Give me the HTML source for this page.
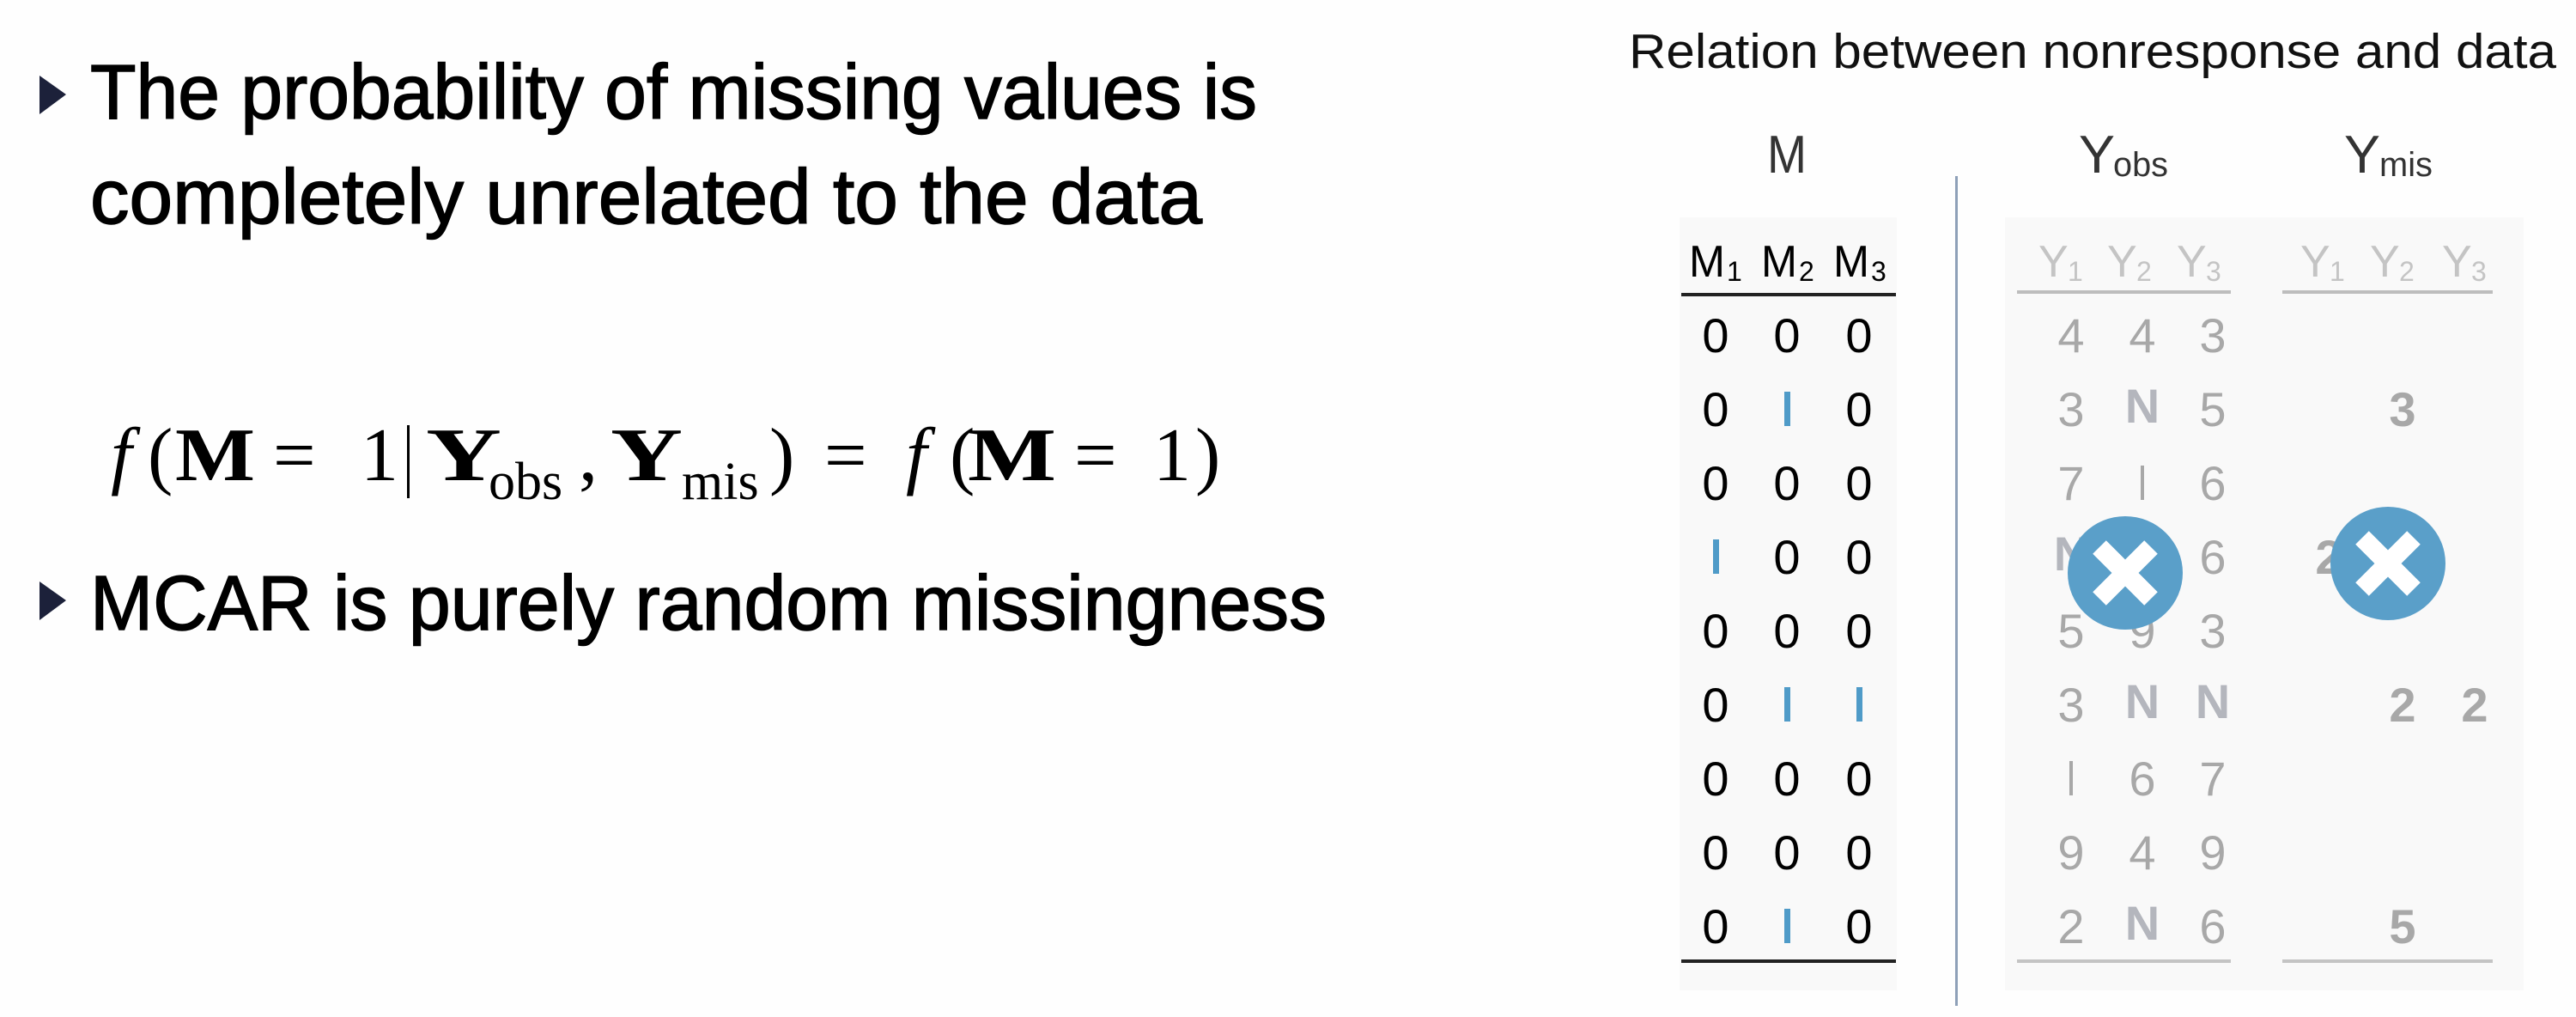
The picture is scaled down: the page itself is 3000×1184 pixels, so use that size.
<!DOCTYPE html>
<html><head><meta charset="utf-8"><style>
html,body{margin:0;padding:0;background:#fff;width:3000px;height:1184px;overflow:hidden}
svg{display:block}
.s{font-family:"Liberation Sans",sans-serif}
.r{font-family:"Liberation Serif",serif}
</style></head><body>
<svg width="3000" height="1184" viewBox="0 0 3000 1184" xmlns="http://www.w3.org/2000/svg">
<rect width="3000" height="1184" fill="#fefefe"/>
<!-- left bullets -->
<polygon points="46,88 46,133 77,110" fill="#1c213a"/>
<g stroke="#000" stroke-width="1.5">
<text class="s" x="105" y="138" font-size="90" fill="#000" textLength="1359" lengthAdjust="spacingAndGlyphs">The probability of missing values is</text>
<text class="s" x="105" y="260" font-size="90" fill="#000" textLength="1295" lengthAdjust="spacingAndGlyphs">completely unrelated to the data</text>
<text class="s" x="105" y="733" font-size="90" fill="#000" textLength="1440" lengthAdjust="spacingAndGlyphs">MCAR is purely random missingness</text>
</g>
<polygon points="46,677 46,722 77,699" fill="#1c213a"/>
<!-- formula -->
<g class="r" fill="#000" font-size="88">
<text x="129" y="559" font-style="italic">f</text>
<text x="172" y="559">(</text>
<text x="204" y="559" font-weight="bold" textLength="93" lengthAdjust="spacingAndGlyphs">M</text>
<text x="318" y="559">=</text>
<text x="420" y="559">1</text>
<rect x="474" y="495" width="3" height="85"/>
<text x="496" y="559" font-weight="bold" textLength="88" lengthAdjust="spacingAndGlyphs">Y</text>
<text x="569" y="581" font-size="62">obs</text>
<text x="674" y="559">,</text>
<text x="711" y="559" font-weight="bold" textLength="84" lengthAdjust="spacingAndGlyphs">Y</text>
<text x="794" y="581" font-size="62">mis</text>
<text x="896" y="559">)</text>
<text x="960" y="559">=</text>
<text x="1055" y="559" font-style="italic">f</text>
<text x="1106" y="559">(</text>
<text x="1127" y="559" font-weight="bold" textLength="103" lengthAdjust="spacingAndGlyphs">M</text>
<text x="1251" y="559">=</text>
<text x="1343" y="559">1</text>
<text x="1392" y="559">)</text>
</g>
<!-- right -->
<text class="s" x="1897" y="79" font-size="57" fill="#111" textLength="1080" lengthAdjust="spacingAndGlyphs">Relation between nonresponse and data</text>
<g class="s" fill="#333" font-size="62">
<text x="2058" y="201" textLength="46" lengthAdjust="spacingAndGlyphs">M</text>
<text x="2421" y="201" textLength="42" lengthAdjust="spacingAndGlyphs">Y</text>
<text x="2461" y="205" font-size="40" textLength="64" lengthAdjust="spacingAndGlyphs">obs</text>
<text x="2730" y="201" textLength="42" lengthAdjust="spacingAndGlyphs">Y</text>
<text x="2771" y="205" font-size="40" textLength="62" lengthAdjust="spacingAndGlyphs">mis</text>
</g>
<rect x="1956" y="253" width="253" height="900" fill="#f9f9f9"/>
<rect x="2335" y="253" width="604" height="900" fill="#f9f9f9"/>
<rect x="2277" y="205" width="3" height="966" fill="#8ea0b8"/>
<!-- sub headers -->
<g class="s" font-size="52" fill="#000">
<text x="1967" y="322" textLength="42" lengthAdjust="spacingAndGlyphs">M</text><text x="2011" y="327" font-size="32">1</text>
<text x="2051" y="322" textLength="42" lengthAdjust="spacingAndGlyphs">M</text><text x="2095" y="327" font-size="32">2</text>
<text x="2135" y="322" textLength="42" lengthAdjust="spacingAndGlyphs">M</text><text x="2179" y="327" font-size="32">3</text>
</g>
<g class="s" font-size="52" fill="#c4c4c4">
<text x="2374" y="322">Y</text><text x="2408" y="327" font-size="32">1</text>
<text x="2454" y="322">Y</text><text x="2488" y="327" font-size="32">2</text>
<text x="2535" y="322">Y</text><text x="2569" y="327" font-size="32">3</text>
<text x="2679" y="322">Y</text><text x="2713" y="327" font-size="32">1</text>
<text x="2760" y="322">Y</text><text x="2794" y="327" font-size="32">2</text>
<text x="2844" y="322">Y</text><text x="2878" y="327" font-size="32">3</text>
</g>
<rect x="1958" y="341" width="250" height="4" fill="#222"/>
<rect x="2349" y="338" width="249" height="4" fill="#bdbdbd"/>
<rect x="2658" y="338" width="245" height="4" fill="#bdbdbd"/>
<rect x="1958" y="1117" width="250" height="4" fill="#222"/>
<rect x="2349" y="1117" width="249" height="4" fill="#c4c4c4"/>
<rect x="2658" y="1117" width="245" height="4" fill="#c4c4c4"/>
<!-- M matrix -->
<g class="s" font-size="56" fill="#000" text-anchor="middle">
<text x="1998" y="410">0</text><text x="2081" y="410">0</text><text x="2165" y="410">0</text>
<text x="1998" y="496">0</text><text x="2165" y="496">0</text>
<text x="1998" y="582">0</text><text x="2081" y="582">0</text><text x="2165" y="582">0</text>
<text x="2081" y="668">0</text><text x="2165" y="668">0</text>
<text x="1998" y="754">0</text><text x="2081" y="754">0</text><text x="2165" y="754">0</text>
<text x="1998" y="840">0</text>
<text x="1998" y="926">0</text><text x="2081" y="926">0</text><text x="2165" y="926">0</text>
<text x="1998" y="1012">0</text><text x="2081" y="1012">0</text><text x="2165" y="1012">0</text>
<text x="1998" y="1098">0</text><text x="2165" y="1098">0</text>
</g>
<g fill="#4f9bc8">
<rect x="2078" y="456" width="7" height="40"/>
<rect x="1995" y="628" width="7" height="40"/>
<rect x="2078" y="800" width="7" height="40"/>
<rect x="2162" y="800" width="7" height="40"/>
<rect x="2078" y="1058" width="7" height="40"/>
</g>
<!-- Yobs -->
<g class="s" font-size="56" fill="#a8a8a8" text-anchor="middle">
<text x="2412" y="410">4</text><text x="2495" y="410">4</text><text x="2577" y="410">3</text>
<text x="2412" y="496">3</text><text x="2577" y="496">5</text>
<text x="2412" y="582">7</text><text x="2577" y="582">6</text>
<text x="2577" y="668">6</text>
<text x="2412" y="754">5</text><text x="2495" y="754">9</text><text x="2577" y="754">3</text>
<text x="2412" y="840">3</text>
<text x="2495" y="926">6</text><text x="2577" y="926">7</text>
<text x="2412" y="1012">9</text><text x="2495" y="1012">4</text><text x="2577" y="1012">9</text>
<text x="2412" y="1098">2</text><text x="2577" y="1098">6</text>
</g>
<g fill="#a8a8a8"><rect x="2493" y="542" width="4" height="40"/><rect x="2410" y="886" width="4" height="40"/></g>
<g class="s" font-size="56" font-weight="bold" fill="#b4b6bd" text-anchor="middle">
<text x="2495" y="492">N</text>
<text x="2412" y="664">N</text>
<text x="2495" y="836">N</text><text x="2577" y="836">N</text>
<text x="2495" y="1094">N</text>
</g>
<!-- Ymis -->
<g class="s" font-size="56" font-weight="bold" fill="#a8a8a8" text-anchor="middle">
<text x="2798" y="496">3</text>
<text x="2712" y="668">2</text>
<text x="2798" y="840">2</text><text x="2882" y="840">2</text>
<text x="2798" y="1098">5</text>
</g>
<!-- circles -->
<g>
<ellipse cx="2475" cy="667" rx="67" ry="66" fill="#5a9fc9"/>
<path d="M2445 637 L2505 697 M2505 637 L2445 697" stroke="#fff" stroke-width="22"/>
<ellipse cx="2781" cy="656" rx="67" ry="66" fill="#5a9fc9"/>
<path d="M2751 626 L2811 686 M2811 626 L2751 686" stroke="#fff" stroke-width="22"/>
</g>
</svg>
</body></html>
